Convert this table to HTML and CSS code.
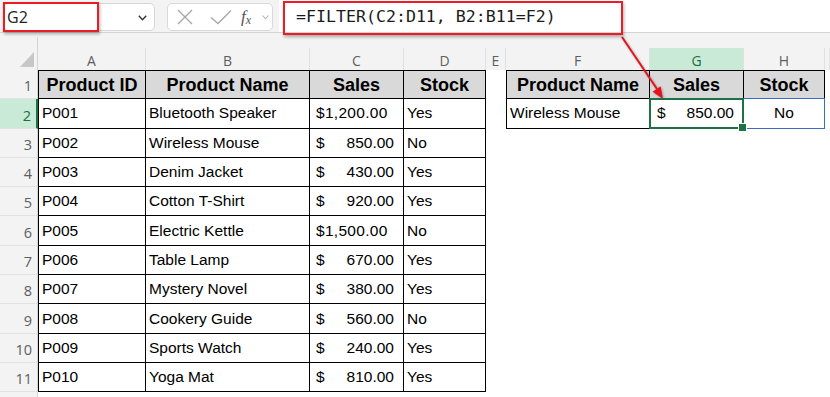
FILE: index.html
```html
<!DOCTYPE html>
<html lang="en">
<head>
<meta charset="utf-8">
<title>FILTER example</title>
<link rel="stylesheet" href="styles.css">
</head>
<body>
<div class="app">
  <div class="toolbar">
    <div class="namebox">
      <span class="nb-text">G2</span>
      <svg class="nb-chev" width="9" height="6" viewBox="0 0 9 6"><path d="M0.8 0.8 L4.5 4.8 L8.2 0.8" fill="none" stroke="#333" stroke-width="1.4"/></svg>
      <span class="red-mark nb-mark"></span>
    </div>
    <div class="fxbox">
      <svg class="ic-x" width="16" height="16" viewBox="0 0 16 16"><path d="M1 1 L15 15 M15 1 L1 15" fill="none" stroke="#a6a6a6" stroke-width="1.3"/></svg>
      <svg class="ic-check" width="22" height="16" viewBox="0 0 22 16"><polyline points="1,8.5 8,14.5 21,1.5" fill="none" stroke="#a6a6a6" stroke-width="1.3"/></svg>
      <span class="fx">f<sub>x</sub></span>
      <svg class="ic-chev" width="7" height="5" viewBox="0 0 7 5"><path d="M0.5 0.5 L3.5 3.8 L6.5 0.5" fill="none" stroke="#b3b3b3" stroke-width="1.1"/></svg>
    </div>
    <div class="formula">
      <span class="formula-text">=FILTER(C2:D11, B2:B11=F2)</span>
      <span class="red-mark f-mark"></span>
    </div>
  </div>

  <div class="sheet">
    <div class="row spacer"><div class="rh-top"></div></div>
    <div class="row colhead">
      <div class="corner"><svg width="14" height="15" viewBox="0 0 14 15"><polygon points="14,0 14,15 0,15" fill="#c7c7c7"/></svg></div>
      <div class="ch">A</div><div class="ch">B</div><div class="ch">C</div><div class="ch">D</div><div class="ch">E</div><div class="ch">F</div><div class="ch ch-sel">G</div><div class="ch">H</div><div class="ch"></div>
    </div>

    <div class="row">
      <div class="rh">1</div>
      <div class="c th a">Product ID</div><div class="c th">Product Name</div><div class="c th">Sales</div><div class="c th">Stock</div>
      <div class="e"></div>
      <div class="c th a">Product Name</div><div class="c th">Sales</div><div class="c th">Stock</div>
      <div class="e"></div>
    </div>
    <div class="row">
      <div class="rh rh-sel">2</div>
      <div class="c a">P001</div><div class="c">Bluetooth Speaker</div><div class="c acc tight"><span>$</span><span>1,200.00</span></div><div class="c">Yes</div>
      <div class="e"></div>
      <div class="c a">Wireless Mouse</div><div class="c acc sel"><span>$</span><span>850.00</span></div><div class="c ctr spill">No</div>
      <div class="e"></div>
    </div>
    <div class="row">
      <div class="rh">3</div>
      <div class="c a">P002</div><div class="c">Wireless Mouse</div><div class="c acc"><span>$</span><span>850.00</span></div><div class="c">No</div>
      <div class="e"></div><div class="e"></div><div class="e"></div><div class="e"></div><div class="e"></div>
    </div>
    <div class="row">
      <div class="rh">4</div>
      <div class="c a">P003</div><div class="c">Denim Jacket</div><div class="c acc"><span>$</span><span>430.00</span></div><div class="c">Yes</div>
      <div class="e"></div><div class="e"></div><div class="e"></div><div class="e"></div><div class="e"></div>
    </div>
    <div class="row">
      <div class="rh">5</div>
      <div class="c a">P004</div><div class="c">Cotton T-Shirt</div><div class="c acc"><span>$</span><span>920.00</span></div><div class="c">Yes</div>
      <div class="e"></div><div class="e"></div><div class="e"></div><div class="e"></div><div class="e"></div>
    </div>
    <div class="row">
      <div class="rh">6</div>
      <div class="c a">P005</div><div class="c">Electric Kettle</div><div class="c acc tight"><span>$</span><span>1,500.00</span></div><div class="c">No</div>
      <div class="e"></div><div class="e"></div><div class="e"></div><div class="e"></div><div class="e"></div>
    </div>
    <div class="row">
      <div class="rh">7</div>
      <div class="c a">P006</div><div class="c">Table Lamp</div><div class="c acc"><span>$</span><span>670.00</span></div><div class="c">Yes</div>
      <div class="e"></div><div class="e"></div><div class="e"></div><div class="e"></div><div class="e"></div>
    </div>
    <div class="row">
      <div class="rh">8</div>
      <div class="c a">P007</div><div class="c">Mystery Novel</div><div class="c acc"><span>$</span><span>380.00</span></div><div class="c">Yes</div>
      <div class="e"></div><div class="e"></div><div class="e"></div><div class="e"></div><div class="e"></div>
    </div>
    <div class="row">
      <div class="rh">9</div>
      <div class="c a">P008</div><div class="c">Cookery Guide</div><div class="c acc"><span>$</span><span>560.00</span></div><div class="c">No</div>
      <div class="e"></div><div class="e"></div><div class="e"></div><div class="e"></div><div class="e"></div>
    </div>
    <div class="row">
      <div class="rh">10</div>
      <div class="c a">P009</div><div class="c">Sports Watch</div><div class="c acc"><span>$</span><span>240.00</span></div><div class="c">Yes</div>
      <div class="e"></div><div class="e"></div><div class="e"></div><div class="e"></div><div class="e"></div>
    </div>
    <div class="row">
      <div class="rh">11</div>
      <div class="c a">P010</div><div class="c">Yoga Mat</div><div class="c acc"><span>$</span><span>810.00</span></div><div class="c">Yes</div>
      <div class="e"></div><div class="e"></div><div class="e"></div><div class="e"></div><div class="e"></div>
    </div>
    <div class="row filler">
      <div class="rh"></div>
      <div class="e"></div><div class="e"></div><div class="e"></div><div class="e"></div><div class="e"></div><div class="e"></div><div class="e"></div><div class="e"></div><div class="e"></div>
    </div>
  </div>

  <svg class="arrow" width="830" height="397" viewBox="0 0 830 397">
    <line x1="622" y1="37" x2="657" y2="89" stroke="#e8121a" stroke-width="2"/>
    <polygon points="663,99 660.6,86.2 652.6,91.8" fill="#e8121a"/>
  </svg>
</div>
</body>
</html>
```

FILE: styles.css
```css
* { box-sizing: border-box; }

html, body {
  margin: 0;
  padding: 0;
}

body {
  width: 830px;
  height: 397px;
  overflow: hidden;
  background: #f3f3f3;
  font-family: "Liberation Sans", Arial, sans-serif;
  color: #000;
}

.app {
  position: relative;
  width: 830px;
  height: 397px;
}

/* ---------- toolbar ---------- */
.toolbar {
  height: 33px;
  display: flex;
  align-items: flex-start;
  border-bottom: 1px solid #d5d5d5;
}

.namebox {
  position: relative;
  margin: 3px 0 0 3px;
  width: 152px;
  height: 28px;
  background: #fff;
  border: 1px solid #d6d6d6;
  border-radius: 5px;
  display: flex;
  align-items: center;
  justify-content: space-between;
  padding: 0 7px 0 3px;
}

.nb-text {
  font-family: "Open Sans", "Noto Sans", sans-serif;
  font-size: 16px;
  color: #222;
}

.nb-chev { display: block; margin-top: 1px; }

.red-mark {
  position: absolute;
  border: 2px solid #ec1c24;
  box-shadow: 1px 2px 3px rgba(0, 0, 0, 0.3);
  pointer-events: none;
}

.nb-mark {
  left: -1px;
  top: -2px;
  width: 96px;
  height: 30px;
}

.fxbox {
  margin: 3px 0 0 12px;
  width: 106px;
  height: 28px;
  background: #fff;
  border: 1px solid #dadada;
  border-radius: 5px;
  display: flex;
  align-items: center;
  padding-left: 9px;
}

.ic-x { display: block; }
.ic-check { display: block; margin-left: 17px; }

.fx {
  margin-left: 9px;
  font-family: "Liberation Serif", "Times New Roman", serif;
  font-style: italic;
  font-size: 17px;
  color: #555;
  line-height: 1;
  width: 15px;
}

.fx sub {
  font-size: 12px;
  vertical-align: -2px;
}

.ic-chev { display: block; margin-left: 6px; }

.formula {
  position: relative;
  flex: 1;
  margin-left: 6px;
  height: 32px;
  background: #fff;
  display: flex;
  align-items: center;
  padding-left: 17px;
}

.formula-text {
  font-family: "DejaVu Sans Mono", "Liberation Mono", monospace;
  font-size: 16.6px;
  color: #1a1a1a;
  white-space: pre;
}

.f-mark {
  left: 4px;
  top: 1px;
  width: 340px;
  height: 34px;
}

/* ---------- sheet ---------- */
.sheet {
  --cols: 38px 108px 164px 94px 82px 20px 144px 94px 81px 1fr;
}

.row {
  display: grid;
  grid-template-columns: var(--cols);
  height: 29.3px;
}

.spacer { height: 15px; }

.rh-top {
  margin-top: 4px;
  border-right: 1px solid #d4d4d4;
}

.colhead { height: 22px; }

.corner {
  border-right: 1px solid #d4d4d4;
  display: flex;
  align-items: flex-end;
  justify-content: flex-end;
  padding: 0 3px 5px 0;
}

.corner svg { display: block; }

.ch {
  display: flex;
  align-items: center;
  justify-content: center;
  font-family: "Open Sans", "Noto Sans", sans-serif;
  font-size: 14px;
  color: #5e5e5e;
  border-right: 1px solid #e0e0e0;
  padding-top: 1px;
}

.ch-sel {
  background: #caead8;
  color: #17703f;
  border-bottom: 2px solid #1e7145;
  padding-top: 3px;
}

.rh {
  display: flex;
  align-items: flex-end;
  justify-content: flex-end;
  padding: 0 5px 3px 0;
  font-family: "Open Sans", "Noto Sans", sans-serif;
  font-size: 14.5px;
  color: #5e5e5e;
  border-right: 1px solid #d4d4d4;
  border-bottom: 1px solid #e2e2e2;
}

.rh-sel {
  background: #caead8;
  color: #17703f;
  border-right: 2px solid #1e7145;
}

.c {
  background: #fff;
  display: flex;
  align-items: center;
  padding: 0 3px;
  font-size: 15.5px;
  white-space: nowrap;
  border-right: 1px solid #000;
  border-bottom: 1px solid #000;
}

.a { border-left: 1px solid #000; }

.th {
  background: #d9d9d9;
  border-top: 1px solid #000;
  justify-content: center;
  font-weight: bold;
  font-size: 18px;
  padding-top: 1px;
}

.acc {
  justify-content: space-between;
  padding: 0 9px 0 6px;
}

.acc.tight {
  justify-content: flex-start;
  letter-spacing: 0.3px;
}

.ctr { justify-content: center; }

.e { background: #fff; }

.filler { height: 12px; }
.filler .rh { border-bottom: none; }

.sel { position: relative; padding-left: 7px; }

.sel::after {
  content: "";
  position: absolute;
  left: -1px;
  top: -1px;
  right: -1px;
  bottom: -1px;
  border: 2px solid #1e7145;
  z-index: 2;
}

.sel::before {
  content: "";
  position: absolute;
  right: -4px;
  bottom: -4px;
  width: 7px;
  height: 7px;
  background: #1e7145;
  border: 1px solid #fff;
  z-index: 3;
}

.spill { position: relative; }

.spill::after {
  content: "";
  position: absolute;
  left: 0;
  top: -1px;
  right: -1px;
  bottom: -1px;
  border: 1px solid #3a6cc6;
  border-left: none;
}

/* ---------- annotation arrow ---------- */
.arrow {
  position: absolute;
  left: 0;
  top: 0;
  pointer-events: none;
  filter: drop-shadow(1px 1px 1px rgba(0, 0, 0, 0.3));
}
```
